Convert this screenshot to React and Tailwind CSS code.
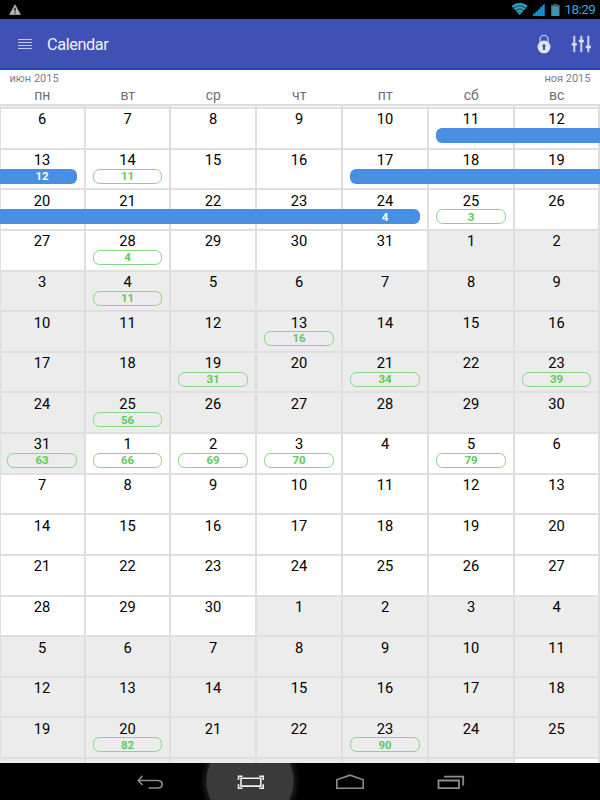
const WEEKDAYS = ['пн', 'вт', 'ср', 'чт', 'пт', 'сб', 'вс'];

const pill = (text) => ({ kind: 'pill', text });
const bar = (shape, text) => ({ kind: shape, text });

// Each week: seven day numbers, the [from, to) range of shaded columns, and marks by column.
const WEEKS = [
  { days: [6, 7, 8, 9, 10, 11, 12], shade: [0, 0], marks: { 5: bar('start'), 6: bar('mid') } },
  { days: [13, 14, 15, 16, 17, 18, 19], shade: [0, 0], marks: { 0: bar('end', 12), 1: pill(11), 4: bar('start'), 5: bar('mid'), 6: bar('mid') } },
  { days: [20, 21, 22, 23, 24, 25, 26], shade: [0, 0], marks: { 0: bar('mid'), 1: bar('mid'), 2: bar('mid'), 3: bar('mid'), 4: bar('end', 4), 5: pill(3) } },
  { days: [27, 28, 29, 30, 31, 1, 2], shade: [5, 7], marks: { 1: pill(4) } },
  { days: [3, 4, 5, 6, 7, 8, 9], shade: [0, 7], marks: { 1: pill(11) } },
  { days: [10, 11, 12, 13, 14, 15, 16], shade: [0, 7], marks: { 3: pill(16) } },
  { days: [17, 18, 19, 20, 21, 22, 23], shade: [0, 7], marks: { 2: pill(31), 4: pill(34), 6: pill(39) } },
  { days: [24, 25, 26, 27, 28, 29, 30], shade: [0, 7], marks: { 1: pill(56) } },
  { days: [31, 1, 2, 3, 4, 5, 6], shade: [0, 1], marks: { 0: pill(63), 1: pill(66), 2: pill(69), 3: pill(70), 5: pill(79) } },
  { days: [7, 8, 9, 10, 11, 12, 13], shade: [0, 0], marks: {} },
  { days: [14, 15, 16, 17, 18, 19, 20], shade: [0, 0], marks: {} },
  { days: [21, 22, 23, 24, 25, 26, 27], shade: [0, 0], marks: {} },
  { days: [28, 29, 30, 1, 2, 3, 4], shade: [3, 7], marks: {} },
  { days: [5, 6, 7, 8, 9, 10, 11], shade: [0, 7], marks: {} },
  { days: [12, 13, 14, 15, 16, 17, 18], shade: [0, 7], marks: {} },
  { days: [19, 20, 21, 22, 23, 24, 25], shade: [0, 7], marks: { 1: pill(82), 4: pill(90) } },
];

const COLS = 'grid grid-cols-[86px_85px_86px_86px_86px_86px_85px]';

const MARK_STYLES = {
  pill: 'mx-[7px] rounded-[6.5px] border border-[#86d686] text-[#5ccb5c]',
  start: 'ml-[7px] -mr-[2px] rounded-l-[6px] bg-[#488fe1] text-white',
  mid: '-mr-[2px] bg-[#488fe1] text-white',
  end: 'mr-[7px] pl-[7px] rounded-r-[6px] bg-[#488fe1] text-white',
};

function Mark({ mark }) {
  return (
    <div className={`relative flex h-[15px] items-center justify-center pt-px text-[11.5px] leading-none font-bold tracking-[-0.2px] ${MARK_STYLES[mark.kind]}`}>
      {mark.text}
    </div>
  );
}

function Cell({ day, shaded, first, mark }) {
  return (
    <div
      className={`border-r-2 border-b-2 border-[#dfdfdf] ${shaded ? 'bg-[#ececec]' : 'bg-white'} ${first ? 'shadow-[inset_1px_0_0_#dfdfdf]' : ''}`}
    >
      <div className="h-[19px] pt-[2.4px] text-center text-[14.7px] leading-[17px] tracking-[-0.1px] text-black">{day}</div>
      {mark && <Mark mark={mark} />}
    </div>
  );
}

function Strip({ shade, height }) {
  return (
    <div className={`${COLS} ${height}`}>
      {WEEKDAYS.map((d, i) => (
        <div key={d} className={`border-r-2 border-[#dfdfdf] ${i >= shade[0] && i < shade[1] ? 'bg-[#ececec]' : 'bg-white'}`} />
      ))}
    </div>
  );
}

function StatusBar() {
  return (
    <div className="flex h-[19px] shrink-0 items-center justify-between bg-black pr-[4px] pl-[9px]">
      <svg width="12" height="11" viewBox="0 0 12 11">
        <path d="M6 .7 11.5 10.5H.5Z" fill="#b8b8b8" stroke="#b8b8b8" strokeWidth=".6" strokeLinejoin="round" />
        <path d="M6 3.8v3.5M6 8.3v1.2" stroke="#111" strokeWidth="1.3" />
      </svg>
      <div className="flex items-center">
        <svg width="50" height="15" viewBox="0 0 50 15">
          <path d="M.8 4.5C5 .3 12.5.3 16.5 4.5L8.7 13Z" fill="#1d5c74" />
          <g fill="none" stroke="#36a3cb" strokeWidth="1.9">
            <path d="M1.3 4.7C5.5 1 12 1 16 4.7" />
            <path d="M3.7 7.4c3-2.6 7-2.6 10 0" />
            <path d="M6 10c1.700-1.400 3.700-1.400 5.400 0" />
          </g>
          <path d="M6.900 11h3.600L8.700 13Z" fill="#36a3cb" />
          <path d="M21.500 14 33.500 2V14Z" fill="#0b6aa3" />
          <path
            d="M22 14v-1.500l1.700-1.500v3ZM24.400 14v-3.400l1.700-1.600V14ZM26.800 14V8.200l1.700-1.600V14ZM29.200 14V5.800l1.700-1.600V14ZM31.600 14V3.500l1.900-1.700V14Z"
            fill="#129ae4"
          />
          <path d="M42.300 1.800h4v2h-4Z" fill="#555" />
          <path d="M40.200 3h8.300v11h-8.300Z" fill="#3c93b5" />
          <path d="M40.200 3h8.300v1.500h-8.300Z" fill="#555" />
        </svg>
        <span className="ml-[4px] w-[31.5px] text-[13.6px] leading-none tracking-[-0.6px] whitespace-nowrap text-[#35a5cf]">18:29</span>
      </div>
    </div>
  );
}

function AppBar() {
  return (
    <div className="flex h-[51px] shrink-0 items-center border-b-2 border-[#2c43bd] bg-[#3f51b5] pl-[18px]">
      <svg className="mt-px" width="14" height="12" viewBox="0 0 14 12">
        <path d="M0 1.500h14M0 4.500h14M0 7.500h14M0 10.500h14" stroke="#c5caec" strokeWidth="1.2" />
      </svg>
      <h1 className="mt-[4px] ml-[15px] text-[16.3px] leading-none tracking-[-0.4px] text-[#f0f1fb]">Calendar</h1>
      <svg className="ml-auto" width="14" height="20" viewBox="0 0 14 20">
        <path d="M3 9V5.300a4 4 0 0 1 8 0V9" fill="none" stroke="#bcc3e8" strokeWidth="1.300" />
        <circle cx="7" cy="13" r="6.500" fill="#dfe2f5" />
        <path d="M7 10.200a1.500 1.500 0 0 1 .9 2.700V16H6.100v-3.100A1.500 1.500 0 0 1 7 10.200Z" fill="#3444a5" />
      </svg>
      <svg className="mr-[9px] ml-[20px]" width="20" height="18" viewBox="0 0 20 18">
        <path d="M3.300.8v16.500M10.300.8v16.500M17.300.8v16.500" stroke="#cdd2f0" strokeWidth="2" />
        <path d="M.8 9.300h5M7.800 6h5M14.800 12h5" stroke="#e4e7f8" strokeWidth="2.300" />
      </svg>
    </div>
  );
}

function NavBar() {
  return (
    <div className="flex h-[37px] shrink-0 items-center overflow-hidden bg-black pl-[100px]">
      <svg className="shrink-0" width="100" height="37" viewBox="0 0 100 37" fill="none" stroke="#8c8c8c" strokeWidth="1.600">
        <path d="M42.500 12.800 38.300 17.500 42.500 22M38.500 17.500H57.500c6.300 0 6.300 7.500 0 7.500h-9" />
      </svg>
      <svg className="shrink-0" width="100" height="37" viewBox="0 0 100 37">
        <defs>
          <radialGradient id="press" cx="50" cy="18" r="50" gradientUnits="userSpaceOnUse">
            <stop offset="0.860" stopColor="#3a3a3a" />
            <stop offset="0.880" stopColor="#181818" />
            <stop offset="1" stopColor="#000" />
          </radialGradient>
        </defs>
        <path d="M0 0h100v37H0Z" fill="url(#press)" />
        <g fill="none" stroke="#eee" strokeWidth="1.600">
          <path d="M41 15.300h19.800v7.800H41Z" />
          <path d="M38.500 17v-3.800h4M59.200 13.200h4V17M63.200 21.200v4h-4M42.500 25.200h-4v-4" />
        </g>
      </svg>
      <svg className="shrink-0" width="100" height="37" viewBox="0 0 100 37" fill="none" stroke="#8c8c8c" strokeWidth="1.600">
        <path d="M36.800 25.200v-8.500L50 12.200l13.200 4.500v8.500Z" />
      </svg>
      <svg className="shrink-0" width="100" height="37" viewBox="0 0 100 37" fill="none" stroke="#8c8c8c" strokeWidth="1.500">
        <path d="M38.500 17.500h20.500v7.700H38.500Z" strokeWidth="1.800" />
        <path d="M44 13.700h19.200V22.500" strokeWidth="1.800" />
      </svg>
    </div>
  );
}

export default function App() {
  return (
    <div className="flex h-[800px] w-[600px] flex-col overflow-hidden bg-white font-[Roboto,sans-serif]">
      <StatusBar />
      <AppBar />
      <div className="flex h-[36px] shrink-0 flex-col overflow-hidden border-b-2 border-[#dedede]">
        <div className="flex h-[16px] items-center justify-between px-[9.5px] text-[11px] leading-none text-[#808080]">
          <span>июн 2015</span>
          <span>ноя 2015</span>
        </div>
        <div className={`${COLS} text-center text-[14px] leading-[18px] text-[#707070]`}>
          {WEEKDAYS.map((d) => (
            <span key={d} className="pr-[1.5px]">{d}</span>
          ))}
        </div>
      </div>
      <div className="flex min-h-0 flex-1 flex-col overflow-hidden">
        <div className="border-b-2 border-[#dfdfdf]">
          <Strip shade={[0, 2]} height="h-[1px]" />
        </div>
        {WEEKS.map((week, r) => (
          <div key={r} className={`${COLS} h-[40.63px] shrink-0`}>
            {week.days.map((day, c) => (
              <Cell key={c} day={day} first={c === 0} shaded={c >= week.shade[0] && c < week.shade[1]} mark={week.marks[c]} />
            ))}
          </div>
        ))}
        <div className="shrink-0">
          <Strip shade={[0, 6]} height="h-[6px]" />
        </div>
      </div>
      <NavBar />
    </div>
  );
}
